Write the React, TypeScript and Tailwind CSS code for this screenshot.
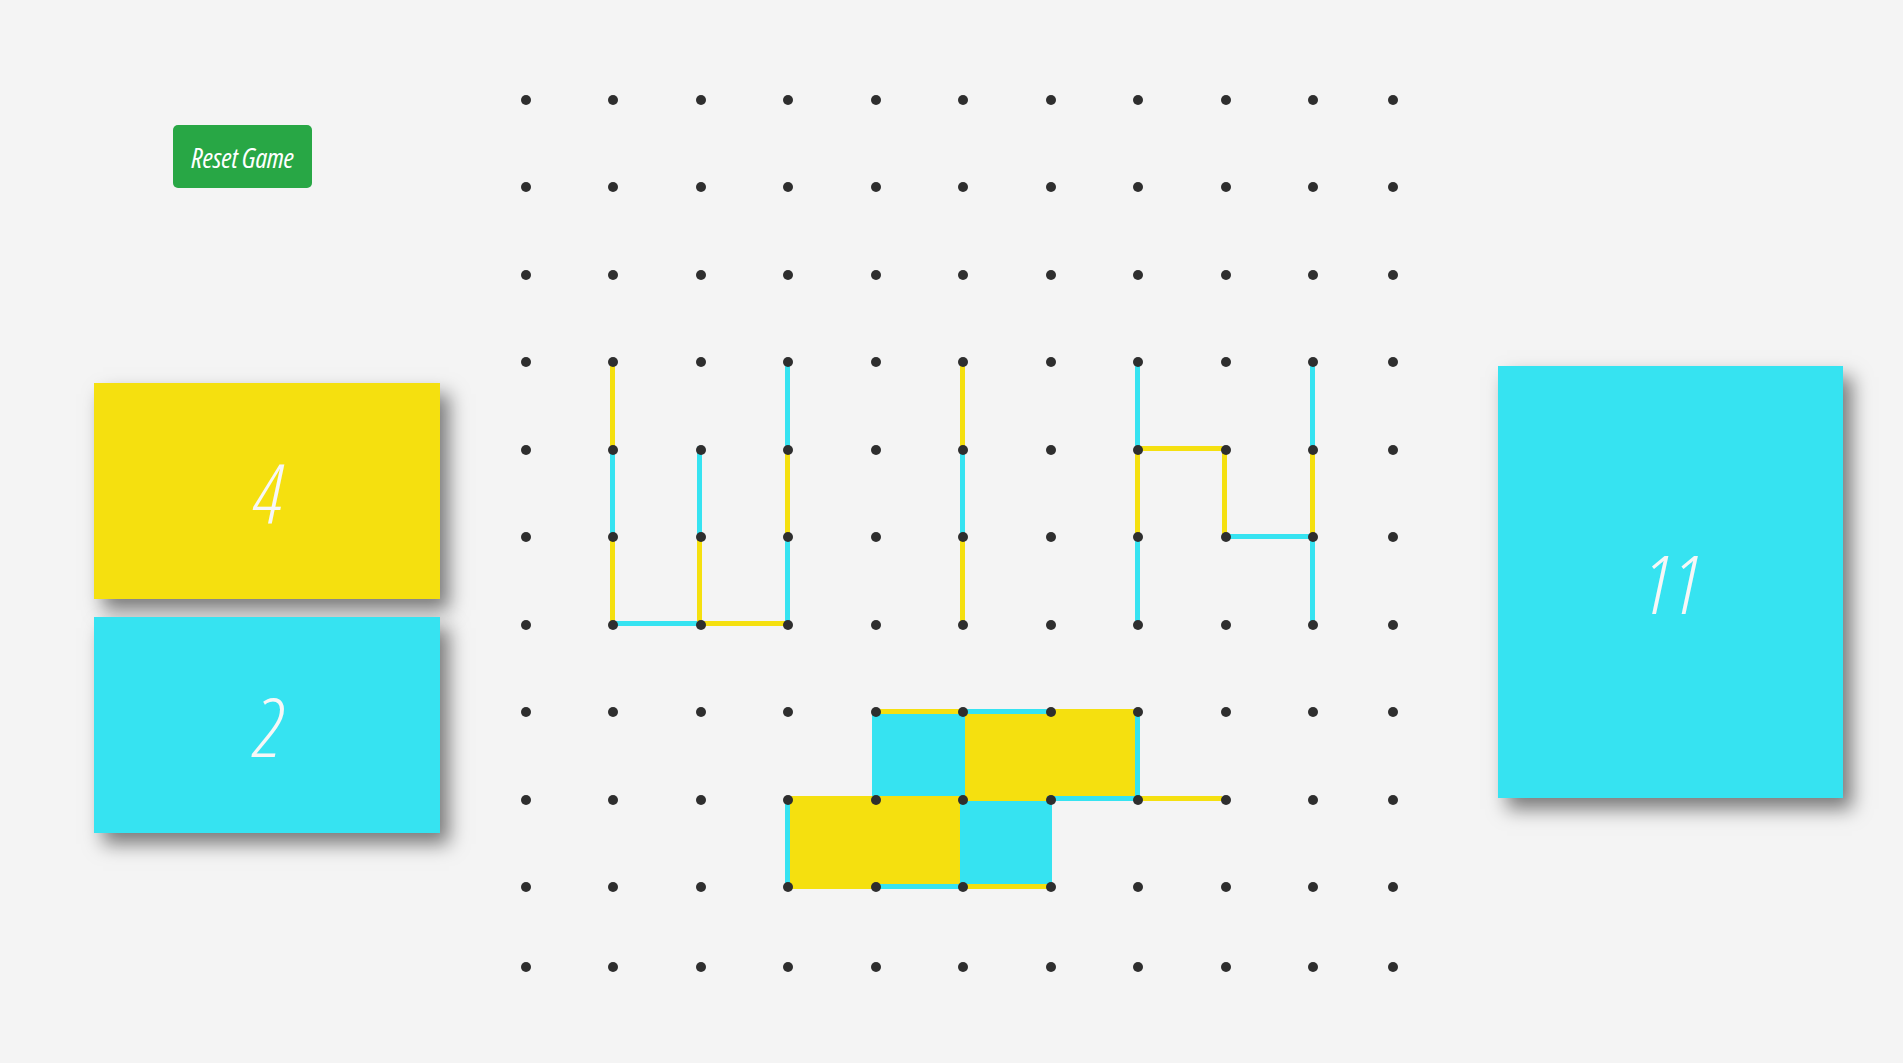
import React from 'react';

type Owner = 'Y' | 'C';

const YELLOW = '#f5e00f';
const CYAN = '#36e3f1';

const fillColor: Record<Owner, string> = {
    Y: 'bg-[#f5e00f]',
    C: 'bg-[#36e3f1]',
};

// top border of cell (row-col) = horizontal line on that row, col -> col+1
const hLines: Record<string, Owner> = {
    '6-1': 'C', '6-2': 'Y',
    '4-7': 'Y', '5-8': 'C',
    '7-4': 'Y', '7-5': 'C', '7-6': 'Y',
    '8-3': 'Y', '8-4': 'Y', '8-5': 'Y', '8-6': 'C', '8-7': 'Y',
    '9-3': 'Y', '9-4': 'C', '9-5': 'Y',
};

// left border of cell (row-col) = vertical line on that col, row -> row+1
const vLines: Record<string, Owner> = {
    '3-1': 'Y', '4-1': 'C', '5-1': 'Y',
    '4-2': 'C', '5-2': 'Y',
    '3-3': 'C', '4-3': 'Y', '5-3': 'C',
    '3-5': 'Y', '4-5': 'C', '5-5': 'Y',
    '3-7': 'C', '4-7': 'Y', '5-7': 'C',
    '4-8': 'Y',
    '3-9': 'C', '4-9': 'Y', '5-9': 'C',
    '7-4': 'C', '7-5': 'C', '7-6': 'Y', '7-7': 'C',
    '8-3': 'C', '8-4': 'Y', '8-5': 'C', '8-6': 'C',
};

const boxes: Record<string, Owner> = {
    '7-4': 'C', '7-5': 'Y', '7-6': 'Y',
    '8-3': 'Y', '8-4': 'Y', '8-5': 'C',
};

const SIZE = 11;

function colorOf(owner?: Owner) {
    if (!owner) return 'transparent';
    return owner === 'Y' ? YELLOW : CYAN;
}

function Cell({ row, col }: { row: number; col: number }) {
    const key = `${row}-${col}`;
    const box = boxes[key];
    return (
        <div
            className={`relative border-t-[5px] border-l-[5px] border-transparent ${box ? fillColor[box] : ''}`}
            style={{
                borderTopColor: colorOf(hLines[key]),
                borderLeftColor: colorOf(vLines[key]),
            }}
        >
            <span className="absolute -left-[6.5px] -top-[6.5px] z-10 h-[10px] w-[10px] rounded-full bg-[#2e2e2e]" />
        </div>
    );
}

function Board() {
    const cells = [];
    for (let r = 0; r < SIZE; r++) {
        for (let c = 0; c < SIZE; c++) {
            cells.push(<Cell key={`${r}-${c}`} row={r} col={c} />);
        }
    }
    return (
        <div className="grid grid-cols-[repeat(9,87.5px)_80px_10px] grid-rows-[repeat(9,87.5px)_80px_10px]">
            {cells}
        </div>
    );
}

function ScoreCard({ value, className }: { value: number; className: string }) {
    return (
        <div
            className={`flex items-center justify-center shadow-[9px_11px_18px_rgba(0,0,0,0.5)] ${className}`}
        >
            <span className="pl-[4px] text-[82px] leading-none font-light italic font-stretch-condensed text-[#f7f7f7]">
                {value}
            </span>
        </div>
    );
}

export default function App() {
    return (
        <div className="flex h-screen overflow-hidden bg-[#f4f4f4] font-['Open_Sans',_'Liberation_Sans',_sans-serif]">
            <aside className="flex w-[522px] shrink-0 flex-col pt-[125px]">
                <button className="ml-[173px] h-[63px] w-[139px] rounded-[5px] bg-[#28a745] text-[28px] font-normal italic font-stretch-condensed tracking-[-0.3px] text-white">
                    Reset Game
                </button>
                <div className="ml-[94px] mt-[195px] flex flex-col gap-[18px]">
                    <ScoreCard value={4} className="h-[216px] w-[346px] bg-[#f5e00f]" />
                    <ScoreCard value={2} className="h-[216px] w-[346px] bg-[#36e3f1]" />
                </div>
            </aside>
            <main className="shrink-0 pt-[96px]">
                <Board />
            </main>
            <aside className="shrink-0 pl-[98.5px] pt-[366px]">
                <ScoreCard value={11} className="h-[432px] w-[345px] bg-[#36e3f1]" />
            </aside>
        </div>
    );
}
